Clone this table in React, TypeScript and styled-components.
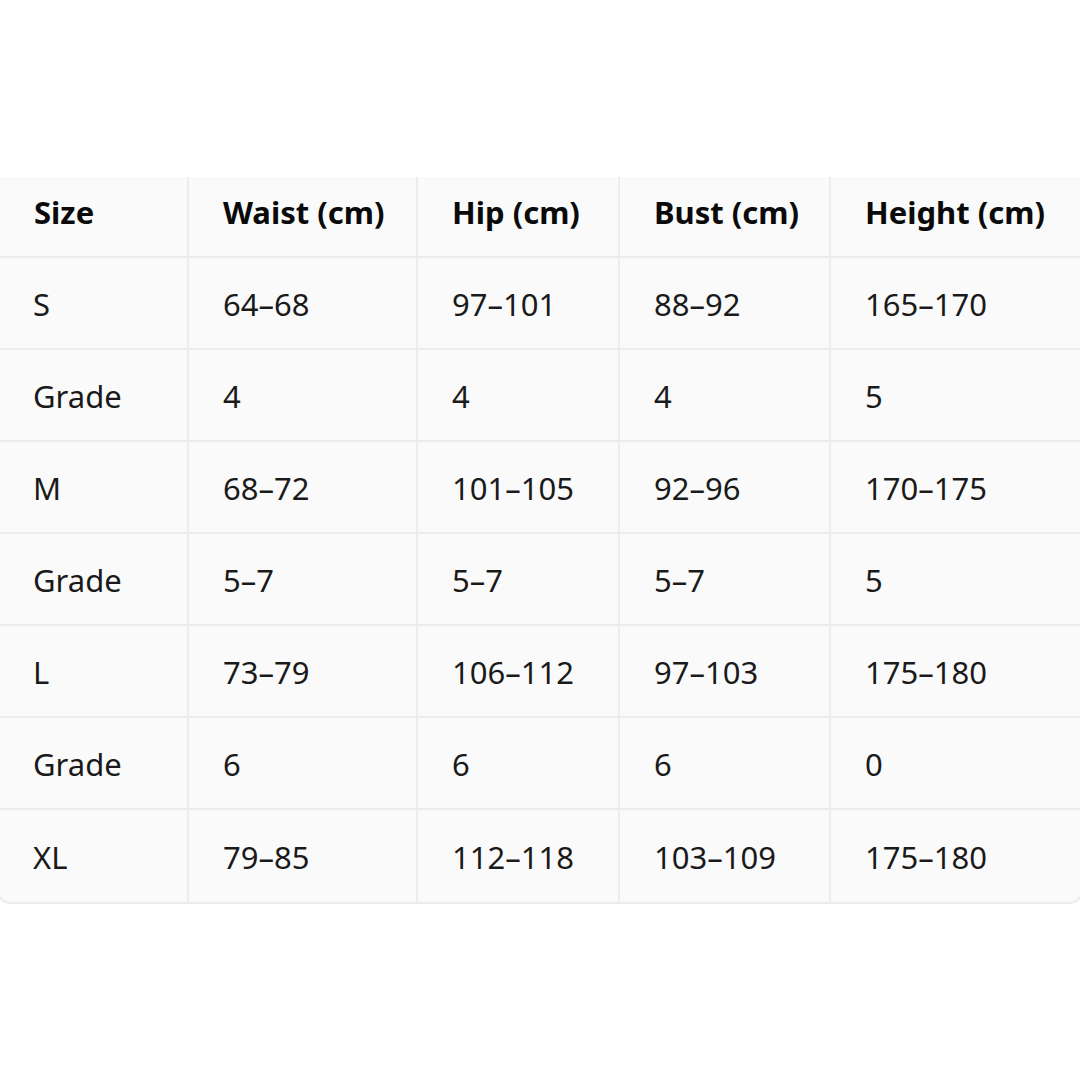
import React from "react";
import styled, { createGlobalStyle } from "styled-components";

const GlobalStyle = createGlobalStyle`
  html, body {
    margin: 0;
    padding: 0;
    background: #ffffff;
  }
  body {
    font-family: "Noto Sans", "Open Sans", "Liberation Sans", sans-serif;
    color: #0d0d0d;
  }
`;

const Page = styled.div`
  width: 1080px;
  height: 1080px;
  background: #ffffff;
  overflow: hidden;
`;

const Clip = styled.div`
  margin-top: 177px;
  overflow: hidden;
  padding-bottom: 4px;
`;

const Card = styled.div`
  margin-top: -13px;
  margin-left: -3px;
  width: 1082px;
  background: #fafafa;
  border: 2px solid #ececec;
  border-radius: 14px;
  overflow: hidden;
`;

const Grid = styled.div`
  display: grid;
  grid-template-columns: 190px 229px 202px 211px 1fr;
`;

const Cell = styled.div<{ $head?: boolean; $lastCol?: boolean; $lastRow?: boolean }>`
  height: 92px;
  box-sizing: border-box;
  display: flex;
  align-items: center;
  padding-left: 34px;
  padding-top: 2px;
  border-right: ${(p) => (p.$lastCol ? "none" : "2px solid #ececec")};
  border-bottom: ${(p) => (p.$lastRow ? "none" : "2px solid #ececec")};
  font-size: 31px;
  font-weight: ${(p) => (p.$head ? 700 : 400)};
  color: ${(p) => (p.$head ? "#0a0a0a" : "#1a1a1a")};
  white-space: nowrap;
  &:first-child {
    padding-left: 35px;
  }
`;

const headers = ["Size", "Waist (cm)", "Hip (cm)", "Bust (cm)", "Height (cm)"];

const rows: string[][] = [
  ["S", "64–68", "97–101", "88–92", "165–170"],
  ["Grade", "4", "4", "4", "5"],
  ["M", "68–72", "101–105", "92–96", "170–175"],
  ["Grade", "5–7", "5–7", "5–7", "5"],
  ["L", "73–79", "106–112", "97–103", "175–180"],
  ["Grade", "6", "6", "6", "0"],
  ["XL", "79–85", "112–118", "103–109", "175–180"],
];

export default function App() {
  return (
    <Page>
      <GlobalStyle />
      <Clip>
        <Card>
          <Grid>
            {headers.map((h, i) => (
              <Cell key={h} $head $lastCol={i === headers.length - 1}>
                {h}
              </Cell>
            ))}
            {rows.map((row, r) =>
              row.map((v, c) => (
                <Cell
                  key={`${r}-${c}`}
                  $lastCol={c === row.length - 1}
                  $lastRow={r === rows.length - 1}
                >
                  {v}
                </Cell>
              ))
            )}
          </Grid>
        </Card>
      </Clip>
    </Page>
  );
}
